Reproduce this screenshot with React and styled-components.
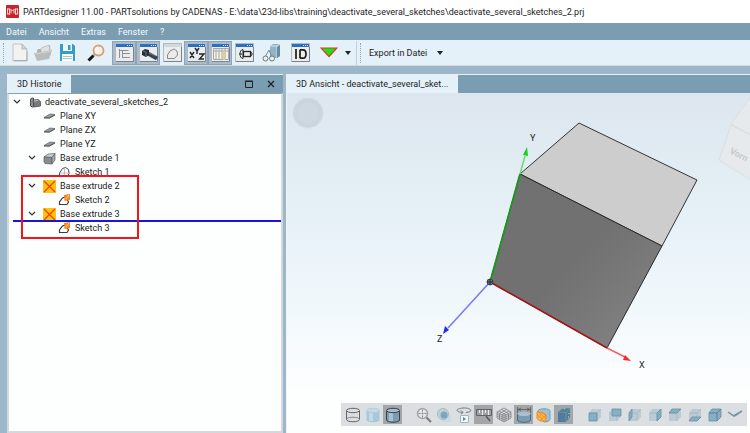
import React from "react";
import styled, { createGlobalStyle } from "styled-components";

const GlobalStyle = createGlobalStyle`
  * { box-sizing: border-box; }
  body {
    margin: 0;
    background: #9bb7c9;
    color: #1c1c1c;
    font-family: Roboto, "Open Sans", sans-serif;
    font-size: 9px;
    line-height: 14px;
  }
  button {
    font: inherit;
    color: inherit;
    border: 0;
    background: none;
    padding: 0;
    white-space: nowrap;
  }
  ul { list-style: none; margin: 0; padding: 0; }
  svg { display: block; flex: none; }
`;

const Window = styled.div`
  display: flex;
  flex-direction: column;
  min-height: 100vh;
`;

const TitleBar = styled.header`
  display: flex;
  align-items: center;
  gap: 4px;
  height: 23px;
  padding-left: 6px;
  background: #fff;
`;

const Title = styled.h1`
  margin: 0;
  font-size: 9px;
  font-weight: 400;
  white-space: nowrap;
`;

const MenuBar = styled.nav`
  display: flex;
  gap: 12px;
  height: 17px;
  padding: 0 6px;
  background: #7b9db2;
  color: #f4fafd;
`;

const ToolBar = styled.div`
  display: flex;
  align-items: center;
  height: 26px;
  padding-left: 3px;
  background: #e5f1f8;
  border-bottom: 1px solid #d0dbe0;
`;

const Grip = styled.span`
  height: 20px;
  margin-right: ${(p) => p.$space || 0}px;
  border-left: 1px dotted #8fa3ae;
`;

const Separator = styled.span`
  height: 24px;
  margin: 0 3px 0 4px;
  border-left: 1px solid #c3d0d8;
`;

const ToolButton = styled.button`
  display: flex;
  align-items: center;
  justify-content: center;
  width: ${(p) => p.$w || 24}px;
  height: 24px;
  border: 1px solid transparent;
  &[aria-pressed="true"] {
    background: #a9bccb;
    border-color: #8fa3b4;
  }
`;

const ExportButton = styled.button`
  display: flex;
  align-items: center;
  gap: 10px;
  margin-left: 8px;
`;

const Workspace = styled.main`
  flex: 1;
  display: grid;
  grid-template-columns: 276px minmax(0, 1fr);
  gap: 3px;
  padding: 8px 0 0 7px;
`;

const Panel = styled.section`
  display: flex;
  flex-direction: column;
  min-width: 0;
`;

const TabStrip = styled.div`
  display: flex;
  align-items: stretch;
  height: 19px;
  background: #7b9db2;
  border-top: 1px solid #e6f0f5;
`;

const Tab = styled.button`
  padding: 0 10px;
  background: #e5f1f8;
`;

const PanelActions = styled.div`
  display: flex;
  align-items: center;
  gap: 14px;
  margin-left: auto;
  padding-right: 8px;
`;

const TreePane = styled.div`
  position: relative;
  flex: 1;
  padding: 1px 0 0 4px;
  background: #fdfefe;
  border: 2px solid #d3d8de;
  border-top: 1px solid #8aa0b0;
`;

const TreeRow = styled.li`
  display: flex;
  align-items: center;
  height: 14px;
  padding-left: ${(p) => p.$depth * 15}px;
  white-space: nowrap;
`;

const TreeToggle = styled.button`
  display: flex;
  width: 14px;
  flex: none;
`;

const TreeIcon = styled.span`
  display: flex;
  justify-content: center;
  width: 14px;
  margin-right: 4px;
`;

const InsertMarker = styled.div`
  position: absolute;
  left: 4px;
  right: 0;
  top: 126px;
  height: 2px;
  background: #1616e0;
`;

const Highlight = styled.div`
  position: absolute;
  left: 12px;
  top: 81px;
  width: 118px;
  height: 64px;
  border: 2px solid #f5141c;
`;

const Viewport = styled.div`
  position: relative;
  flex: 1;
  overflow: hidden;
  border-left: 1px solid #eef4f8;
  background: linear-gradient(#dde6ee 0, #e4eff6 110px, #f1f8fc 215px, #fdfefe 300px);
`;

const Scene = styled.svg`
  position: absolute;
  left: 0;
  top: 0;
`;

const ViewTools = styled.div`
  position: absolute;
  right: 3px;
  bottom: 7px;
  display: flex;
  align-items: center;
  height: 23px;
  padding: 0 3px 0 2px;
  background: #dcdfe1;
`;

const ViewGroup = styled.div`
  display: flex;
  gap: 1px;
  & + & { margin-left: 12px; }
`;

const ViewButton = styled.button`
  display: flex;
  align-items: center;
  justify-content: center;
  width: 19px;
  height: 19px;
  &[aria-pressed="true"] { background: #a2a6a9; }
`;

const Icon = ({ w = 16, h = 16, box, children }) => (
  <svg width={w} height={h} viewBox={box || `0 0 ${w} ${h}`} fill="none" aria-hidden="true">
    {children}
  </svg>
);

const Caret = () => (
  <Icon w={6} h={4}><path d="M0 0h6L3 4z" fill="#222" /></Icon>
);

const AppIcon = () => (
  <Icon w={13} h={13}>
    <rect width="13" height="13" rx="1" fill="#c8242b" />
    <path d="M1.500 3.500v6M3.500 3.500v6M1.500 4h2M5 4v4.500M8 4v4.500M5 4.500l1.500 1.500L8 4.500M9.500 3.500v6M11.500 3.500v6M9.500 4h2M2 9h2M9 9h2" stroke="#f6d5d5" />
  </Icon>
);

const NewIcon = () => (
  <Icon w={16} h={19}>
    <path d="M1 1h9l5 5v12H1z" fill="#f2f2f0" stroke="#bfc3c4" />
    <path d="M10 1v5h5z" fill="#d2d5d5" stroke="#b5b9ba" />
    <path d="M2 17.500h13V8" stroke="#a9adae" />
  </Icon>
);

const OpenIcon = () => (
  <Icon w={19} h={18}>
    <path d="M3 7l1-2h4l1-2 7-2 1 10-13 5z" fill="#aeb1b2" />
    <path d="M7 4l8-3 1 8H7z" fill="#dfe1e1" stroke="#b4b7b8" strokeWidth=".6" />
    <path d="M0 9l13-2 5-1-3 9-12 2z" fill="#b9bcbd" />
    <path d="M1 10l12-2 4-1" stroke="#d4d6d6" />
  </Icon>
);

const SaveIcon = () => (
  <Icon w={17} h={19}>
    <path d="M1 1h13l2 2v15H1z" fill="#389cc8" />
    <path d="M4 1h9v7H4z" fill="#edf6fa" />
    <path d="M9 2h2.500v5H9z" fill="#389cc8" />
    <path d="M3 11h11v7H3z" fill="#f8fcfd" />
    <path d="M4 13.500h9M4 15.500h9" stroke="#a5c5d5" />
  </Icon>
);

const SearchIcon = () => (
  <Icon w={18} h={18}>
    <path d="M1.500 16.500l5-5" stroke="#151515" strokeWidth="3" />
    <path d="M6 12l2-2" stroke="#8c6b40" strokeWidth="1.500" />
    <circle cx="11.500" cy="6.500" r="5" fill="#f8f1ec" stroke="#d8a071" strokeWidth="1.800" />
    <path d="M8 6a3.500 3.500 0 013-3" stroke="#fff" />
  </Icon>
);

const FrameIcon = ({ bar = "#2b6ec6", children }) => (
  <Icon w={19} h={19}>
    <rect x=".5" y=".5" width="18" height="18" fill="#ececeb" stroke="#b3bbc2" />
    <path d="M1 1h17v3H1z" fill={bar} />
    <path d="M12 2.500h5" stroke="#cfe0f3" strokeDasharray="1 1" />
    <path d="M1 18.500h17.500V4" stroke="#78838e" />
    {children}
  </Icon>
);

const HistoryIcon = () => (
  <FrameIcon>
    <path d="M4.500 6v9M4.500 7.500h9M7.500 8v7M8 10.500h7M8 14.500h7" stroke="#8f9293" />
  </FrameIcon>
);
const BoltIcon = () => (
  <FrameIcon>
    <path d="M8 10l10 5.500" stroke="#3a444d" strokeWidth="4" />
    <path d="M8 9l9 4" stroke="#73818c" />
    <path d="M3 8l3-2 4 1v5l-3 2-4-2z" fill="#26313a" />
    <path d="M4 8l3 1v4" stroke="#677784" />
  </FrameIcon>
);
const SketchFrameIcon = () => (
  <FrameIcon bar="#d5d8da">
    <path d="M4.500 15.500V12L7 8l4-2 3 2 .5 4-3 3.500z" stroke="#858a8d" />
  </FrameIcon>
);
const XyzIcon = () => (
  <FrameIcon>
    <path d="M3 9l4 6M7 9l-4 6M8 5l2 3 2-3M10 8v3M12 11h5l-4.500 5H17" stroke="#22282c" strokeWidth="1.400" />
  </FrameIcon>
);
const TableIcon = () => (
  <FrameIcon>
    <path d="M2.500 5.500h15v11h-15z" fill="#f3f1e9" stroke="#a6a8a5" />
    <path d="M5 5v12M8 5v12M11 5v12M14 5v12M2 8h15" stroke="#aaa99f" />
    <path d="M12 8h2v9h-2z" fill="#e2cf93" />
  </FrameIcon>
);
const PartFrameIcon = () => (
  <FrameIcon>
    <rect x="8.500" y="8.500" width="7" height="5" stroke="#25282a" strokeWidth="1.300" />
    <path d="M8 6.500c-4 0-4 9 0 9zM4 11h3M15 9l2 1v2l-2 1" stroke="#25282a" />
  </FrameIcon>
);
const AssemblyIcon = () => (
  <Icon w={20} h={20}>
    <path d="M8 3l3-2h7v12l-3 2H8z" fill="#94b2c3" />
    <path d="M8 3h7v12M15 3l3-2" stroke="#d6e6ee" />
    <path d="M15 4v11l3-2V2z" fill="#668ca3" />
    <path d="M3 14l4-7 3 7" stroke="#788b95" />
    <circle cx="3.500" cy="15.500" r="2.500" fill="#e9f2f6" stroke="#71777a" />
    <circle cx="10" cy="15.500" r="2.500" fill="#e9f2f6" stroke="#71777a" />
  </Icon>
);
const IdIcon = () => (
  <FrameIcon>
    <path d="M5 6v10M9 6.800v8.400M9 6.800h3q3 0 3 4.200t-3 4.200H9" stroke="#1d1d1d" strokeWidth="1.700" />
  </FrameIcon>
);
const GreenIcon = () => (
  <Icon w={18} h={11}>
    <path d="M1 1h16L9 9.500z" fill="#16e516" stroke="#e03a23" strokeWidth="1.200" />
  </Icon>
);

const Chevron = () => (
  <Icon w={8} h={6}><path d="M1 1l3 3 3-3" stroke="#333" strokeWidth="1.200" /></Icon>
);
const PartIcon = () => (
  <Icon w={13} h={11}>
    <path d="M2.500 9V3q0-2 2-2h1v9h-1z" fill="#8d9090" stroke="#4c4e50" />
    <path d="M5 3l5-.5 2.500 2V9L6 10z" fill="#777b7d" stroke="#505355" strokeWidth=".8" />
    <path d="M6 4l4-.5" stroke="#c3c6c7" />
  </Icon>
);
const PlaneIcon = () => (
  <Icon w={13} h={10}>
    <path d="M1 6.500l6-3.500 5 .5L6.500 7z" fill="#999c9e" stroke="#606466" strokeWidth=".7" />
    <path d="M1 7h5.500L12 4" stroke="#505355" />
  </Icon>
);
const ExtrudeIcon = () => (
  <Icon w={13} h={13}>
    <path d="M1 5l4-3 7-.5-3 4z" fill="#c9cbcc" stroke="#65696b" strokeWidth=".7" />
    <path d="M1 5l8 .5V12l-7-.5-1-1.500z" fill="#898d8f" stroke="#55595b" strokeWidth=".7" />
    <path d="M9 5.500l3-4V8l-3 4z" fill="#a5a9aa" stroke="#606466" strokeWidth=".7" />
  </Icon>
);
const SketchIcon = () => (
  <Icon w={13} h={12}>
    <path d="M1.500 10V7l3-4.500 3-1 3 2 .5 4-1.500 2.500z" fill="#fff" stroke="#494949" />
    <path d="M6.500 2v8M2 7h9" stroke="#a8aaaa" strokeWidth=".7" />
  </Icon>
);
const DisabledIcon = () => (
  <Icon w={13} h={13}>
    <path d="M0 0h13v13H0z" fill="#ffc20e" />
    <path d="M1 1l11 11M12 1L1 12" stroke="#e2431b" strokeWidth="1.200" />
  </Icon>
);
const EditedSketchIcon = () => (
  <Icon w={13} h={12}>
    <path d="M1.500 10.500V8l3-4 3-1 3 5-1.500 2.500z" fill="#fff" stroke="#3d3d3d" strokeWidth="1.200" />
    <path d="M6 1l6-1v6L6.500 7z" fill="#f28a22" />
    <path d="M8 5l3-4" stroke="#fbd39c" />
  </Icon>
);

const WireIcon = () => (
  <Icon>
    <ellipse cx="8" cy="3.500" rx="6.500" ry="2.200" stroke="#606466" />
    <path d="M1.500 4v8.500c0 3 13 3 13 0V4" stroke="#606466" />
    <path d="M1.500 12.500c0-3 13-3 13 0" stroke="#85898b" />
  </Icon>
);
const ShadedIcon = ({ edges }) => (
  <Icon>
    <path d="M1.500 4v9c0 3 13 3 13 0V4" fill={edges ? "#7f9caf" : "#a9c7d8"} stroke={edges ? "#34444f" : "none"} />
    <path d="M4 6v8h4V6z" fill={edges ? "#a8c4d3" : "#c3dbe7"} />
    <ellipse cx="8" cy="3.500" rx="6.500" ry="2.200" fill={edges ? "#a4bbc9" : "#c3dbe6"} stroke={edges ? "#34444f" : "#b1cddd"} />
  </Icon>
);
const ZoomIcon = () => (
  <Icon>
    <circle cx="6.500" cy="6.500" r="5" fill="#e4e7e8" stroke="#a2a5a7" strokeWidth="1.500" />
    <path d="M10.500 10.500l4.500 4.500" stroke="#7c8082" strokeWidth="2.200" />
    <path d="M6.500 2.500v8M2.500 6.500h8" stroke="#858a8c" strokeDasharray="2 1" />
  </Icon>
);
const ZoomAreaIcon = () => (
  <Icon>
    <path d="M6 7h9v8H6z" fill="#c6dce7" />
    <circle cx="7" cy="7" r="5.500" fill="#bfd0da" stroke="#adb7bd" />
    <circle cx="8" cy="8" r="3.500" fill="#7ba6be" />
  </Icon>
);
const RotateIcon = () => (
  <Icon>
    <path d="M10 5.500c9-1 4-5-3-4.500-8 .7-8 4 0 4.500M5 3.500l2 2-2 1.500" stroke="#737779" />
    <path d="M4.500 8.500h8v7h-8z" fill="#f2f5f7" stroke="#a5b5bf" />
    <path d="M7 10l3 2-3 2z" fill="#5787a6" />
  </Icon>
);
const MeasureIcon = () => (
  <Icon w={18}>
    <path d="M1.500 2.500h15v6h-15z" fill="#9da1a3" stroke="#5f6365" />
    <path d="M4.500 3v3M7.500 3v5M10.500 3v3M13.500 3v5" stroke="#eff0f0" />
    <path d="M11 9l4 5" stroke="#55595b" strokeWidth="1.500" />
  </Icon>
);
const MeshIcon = () => (
  <Icon>
    <path d="M1 5l7-4 7 4v6l-7 4-7-4zM1 5l7 4 7-4M8 9v6M3 4l7 4v6M5.500 2.500l7 4v6M13 4L6 8v6M10.500 2.500l-7 4v6M1 7l7 4 7-4M1 9l7 4 7-4" stroke="#7c8082" strokeWidth=".8" />
  </Icon>
);
const DimensionIcon = () => (
  <Icon>
    <path d="M1.500 7v6c0 3 13 3 13 0V7z" fill="#789db2" stroke="#496679" />
    <ellipse cx="8" cy="7" rx="6.500" ry="2" fill="#a7c3d2" />
    <path d="M1.500 0v6M14.500 0v6M2 2.500h12M5 1L2 2.500 5 4M11 1l3 1.500L11 4" stroke="#545d62" strokeWidth=".8" />
  </Icon>
);
const SectionIcon = () => (
  <Icon>
    <path d="M2 4c0-3 12-3 12 0v8c0 3-6 3-6 3L2 9z" fill="#9ec1d4" stroke="#769caf" />
    <path d="M1 5c3 0 6 0 9 3v6c-5 1-9-1-9-3z" fill="#f7bb35" stroke="#e6843c" />
    <path d="M1 7l7 7M3 5l7 7M6 5l4 4M2 11l5-6M5 13l5-5" stroke="#e9843c" strokeWidth=".7" />
  </Icon>
);
const SnapIcon = () => (
  <Icon>
    <path d="M2 5l4-3 8-1v9l-4 5H2z" fill="#527c99" />
    <path d="M2 5l8 .5V15M10 5.500L14 1" stroke="#7094aa" />
    <path d="M8 2h1M13 6v1M12 10h1" stroke="#65e38e" strokeWidth="1.500" />
  </Icon>
);

const cubeFaces = {
  front: "M2 6h8v8H2z",
  back: "M5 2h9v7H5z",
  left: "M2 6l3-4v8l-3 4z",
  right: "M10 6l4-4v8l-4 4z",
  top: "M2 6l3-4h9l-4 4z",
  bottom: "M2 14l3-4h9l-4 4z",
  iso: "M2 6l3-4h9v8l-4 4H2z",
};
const CubeIcon = ({ face }) => (
  <Icon>
    <path d={cubeFaces.iso} fill="#bccbd3" />
    <path d="M2 6h8v8M10 6l4-4" stroke="#a2b6c1" strokeWidth=".7" />
    <path d={cubeFaces[face]} fill="#86afc4" stroke="#668fa5" strokeWidth=".8" />
    {face === "iso" && <path d="M2 6h8v8M10 6l4-4" stroke="#55829c" />}
  </Icon>
);
const MoreIcon = () => (
  <Icon><path d="M1 5l6 4 8-5" stroke="#838b90" strokeWidth="1.500" /><path d="M7 9l4-2.500" stroke="#6399bb" strokeWidth="2" /></Icon>
);

const fileTools = [
  { label: "Neu", icon: <NewIcon />, w: 25 },
  { label: "Öffnen", icon: <OpenIcon />, w: 23 },
  { label: "Speichern", icon: <SaveIcon />, w: 24 },
  { label: "Suchen", icon: <SearchIcon />, w: 33 },
];

const paneTools = [
  { label: "Historie", icon: <HistoryIcon />, on: true },
  { label: "3D Ansicht", icon: <BoltIcon />, on: true },
  { label: "Skizze", icon: <SketchFrameIcon />, on: false },
  { label: "Variablen", icon: <XyzIcon />, on: true },
  { label: "Tabelle", icon: <TableIcon />, on: true },
  { label: "Teil", icon: <PartFrameIcon />, on: false },
];

const extraTools = [
  { label: "Baugruppe", icon: <AssemblyIcon />, w: 31 },
  { label: "Kennung", icon: <IdIcon />, w: 27 },
  { label: "Ausführen", icon: <GreenIcon />, w: 30 },
  { label: "Ausführen Optionen", icon: <Caret />, w: 8 },
];

const treeRows = [
  { text: "deactivate_several_sketches_2", icon: <PartIcon />, depth: 0, open: true },
  { text: "Plane XY", icon: <PlaneIcon />, depth: 1 },
  { text: "Plane ZX", icon: <PlaneIcon />, depth: 1 },
  { text: "Plane YZ", icon: <PlaneIcon />, depth: 1 },
  { text: "Base extrude 1", icon: <ExtrudeIcon />, depth: 1, open: true },
  { text: "Sketch 1", icon: <SketchIcon />, depth: 2 },
  { text: "Base extrude 2", icon: <DisabledIcon />, depth: 1, open: true },
  { text: "Sketch 2", icon: <EditedSketchIcon />, depth: 2 },
  { text: "Base extrude 3", icon: <DisabledIcon />, depth: 1, open: true },
  { text: "Sketch 3", icon: <EditedSketchIcon />, depth: 2 },
];

const viewGroups = [
  [
    { label: "Drahtmodell", icon: <WireIcon /> },
    { label: "Schattiert", icon: <ShadedIcon /> },
    { label: "Schattiert mit Kanten", icon: <ShadedIcon edges />, on: true },
  ],
  [
    { label: "Alles zeigen", icon: <ZoomIcon /> },
    { label: "Bereich zoomen", icon: <ZoomAreaIcon /> },
    { label: "Animation", icon: <RotateIcon /> },
    { label: "Messen", icon: <MeasureIcon />, on: true },
    { label: "Netz", icon: <MeshIcon /> },
    { label: "Bemaßung", icon: <DimensionIcon />, on: true },
    { label: "Schnitt", icon: <SectionIcon /> },
    { label: "Fangpunkte", icon: <SnapIcon />, on: true },
  ],
  [
    { label: "Vorne", icon: <CubeIcon face="front" /> },
    { label: "Hinten", icon: <CubeIcon face="back" /> },
    { label: "Links", icon: <CubeIcon face="left" /> },
    { label: "Rechts", icon: <CubeIcon face="right" /> },
    { label: "Oben", icon: <CubeIcon face="top" /> },
    { label: "Unten", icon: <CubeIcon face="bottom" /> },
    { label: "Isometrisch", icon: <CubeIcon face="iso" /> },
    { label: "Weitere Ansichten", icon: <MoreIcon /> },
  ],
];

const Tools = ({ items }) =>
  items.map((t) => (
    <ToolButton key={t.label} aria-label={t.label} aria-pressed={t.on} $w={t.w}>
      {t.icon}
    </ToolButton>
  ));

const Model = () => (
  <Scene width="463" height="340" viewBox="287 93 463 340" fill="none" role="img" aria-label="3D Modell">
    <defs>
      <linearGradient id="side" x1="0" y1="0" x2="1" y2="1">
        <stop offset=".5" stopColor="#717171" />
        <stop offset="1" stopColor="#868686" />
      </linearGradient>
    </defs>
    <circle cx="308" cy="113" r="15" fill="#c9d5df" stroke="#d4dee6" strokeWidth="1.500" strokeDasharray="2 2" />
    <circle cx="308" cy="113" r="11" fill="#cdd8e1" />
    <g fill="#e7eaed" stroke="#d9dfe3">
      <path d="M731 124l25-34v48z" />
      <path d="M731 125l36 19v46l-48-30z" />
    </g>
    <text x="729" y="153" fontSize="9" fontWeight="700" fill="#c5cacf" transform="rotate(27 729 153)">Vorn</text>
    <path d="M520 174l59-51 118 57-35 66z" fill="#cdcdcd" stroke="#333" />
    <path d="M520 174l142 72-55 102-117-66z" fill="url(#side)" stroke="#292929" />
    <path d="M490 282L607 348" stroke="#a31717" strokeWidth="1.500" />
    <path d="M607 348l18 9" stroke="#f06161" strokeWidth="1.500" />
    <path d="M631 361l-8-1 2-5z" fill="#f52c2c" />
    <path d="M490 282l30-108" stroke="#1c981c" strokeWidth="1.800" />
    <path d="M520 174l5-18" stroke="#67dc67" strokeWidth="1.500" />
    <path d="M527 147l1 9-5-1z" fill="#16cf20" />
    <path d="M490 282l-42 46" stroke="#7878f2" strokeWidth="1.500" />
    <path d="M443 334l2-8 4 4z" fill="#2828ee" />
    <circle cx="490" cy="282" r="3" fill="#627178" stroke="#37474e" />
    <path d="M487 282h6M490 279v6" stroke="#263136" />
    <g fill="#222" fontSize="9">
      <text x="530" y="141">Y</text>
      <text x="437" y="342">Z</text>
      <text x="639" y="368">X</text>
    </g>
  </Scene>
);

export default function App() {
  return (
    <Window>
      <GlobalStyle />
      <TitleBar>
        <AppIcon />
        <Title>PARTdesigner 11.00 - PARTsolutions by CADENAS - E:\data\23d-libs\training\deactivate_several_sketches\deactivate_several_sketches_2.prj</Title>
      </TitleBar>
      <MenuBar>
        {["Datei", "Ansicht", "Extras", "Fenster", "?"].map((m) => (
          <button key={m}>{m}</button>
        ))}
      </MenuBar>
      <ToolBar>
        <Grip $space={3} />
        <Tools items={fileTools} />
        <Tools items={paneTools} />
        <Tools items={extraTools} />
        <Separator />
        <Grip />
        <ExportButton>Export in Datei <Caret /></ExportButton>
      </ToolBar>
      <Workspace>
        <Panel>
          <TabStrip>
            <Tab>3D Historie</Tab>
            <PanelActions>
              <button aria-label="Maximieren">
                <Icon w={8} h={8}><path d="M.5 1.500h7v6h-7zM0 1h8" stroke="#1d2226" /></Icon>
              </button>
              <button aria-label="Schließen">
                <Icon w={8} h={8}><path d="M1 1l6 6M7 1L1 7" stroke="#1d2226" strokeWidth="1.300" /></Icon>
              </button>
            </PanelActions>
          </TabStrip>
          <TreePane>
            <ul role="tree">
              {treeRows.map((r) => (
                <TreeRow key={r.text} role="treeitem" aria-expanded={r.open} $depth={r.depth}>
                  <TreeToggle as={r.open ? "button" : "span"} aria-label={r.open ? "Zuklappen" : undefined}>
                    {r.open && <Chevron />}
                  </TreeToggle>
                  <TreeIcon>{r.icon}</TreeIcon>
                  {r.text}
                </TreeRow>
              ))}
            </ul>
            <InsertMarker />
            <Highlight />
          </TreePane>
        </Panel>
        <Panel>
          <TabStrip>
            <Tab>3D Ansicht - deactivate_several_sket...</Tab>
          </TabStrip>
          <Viewport>
            <Model />
            <ViewTools>
              {viewGroups.map((group, i) => (
                <ViewGroup key={i}>
                  {group.map((v) => (
                    <ViewButton key={v.label} aria-label={v.label} aria-pressed={v.on}>{v.icon}</ViewButton>
                  ))}
                </ViewGroup>
              ))}
            </ViewTools>
          </Viewport>
        </Panel>
      </Workspace>
    </Window>
  );
}
